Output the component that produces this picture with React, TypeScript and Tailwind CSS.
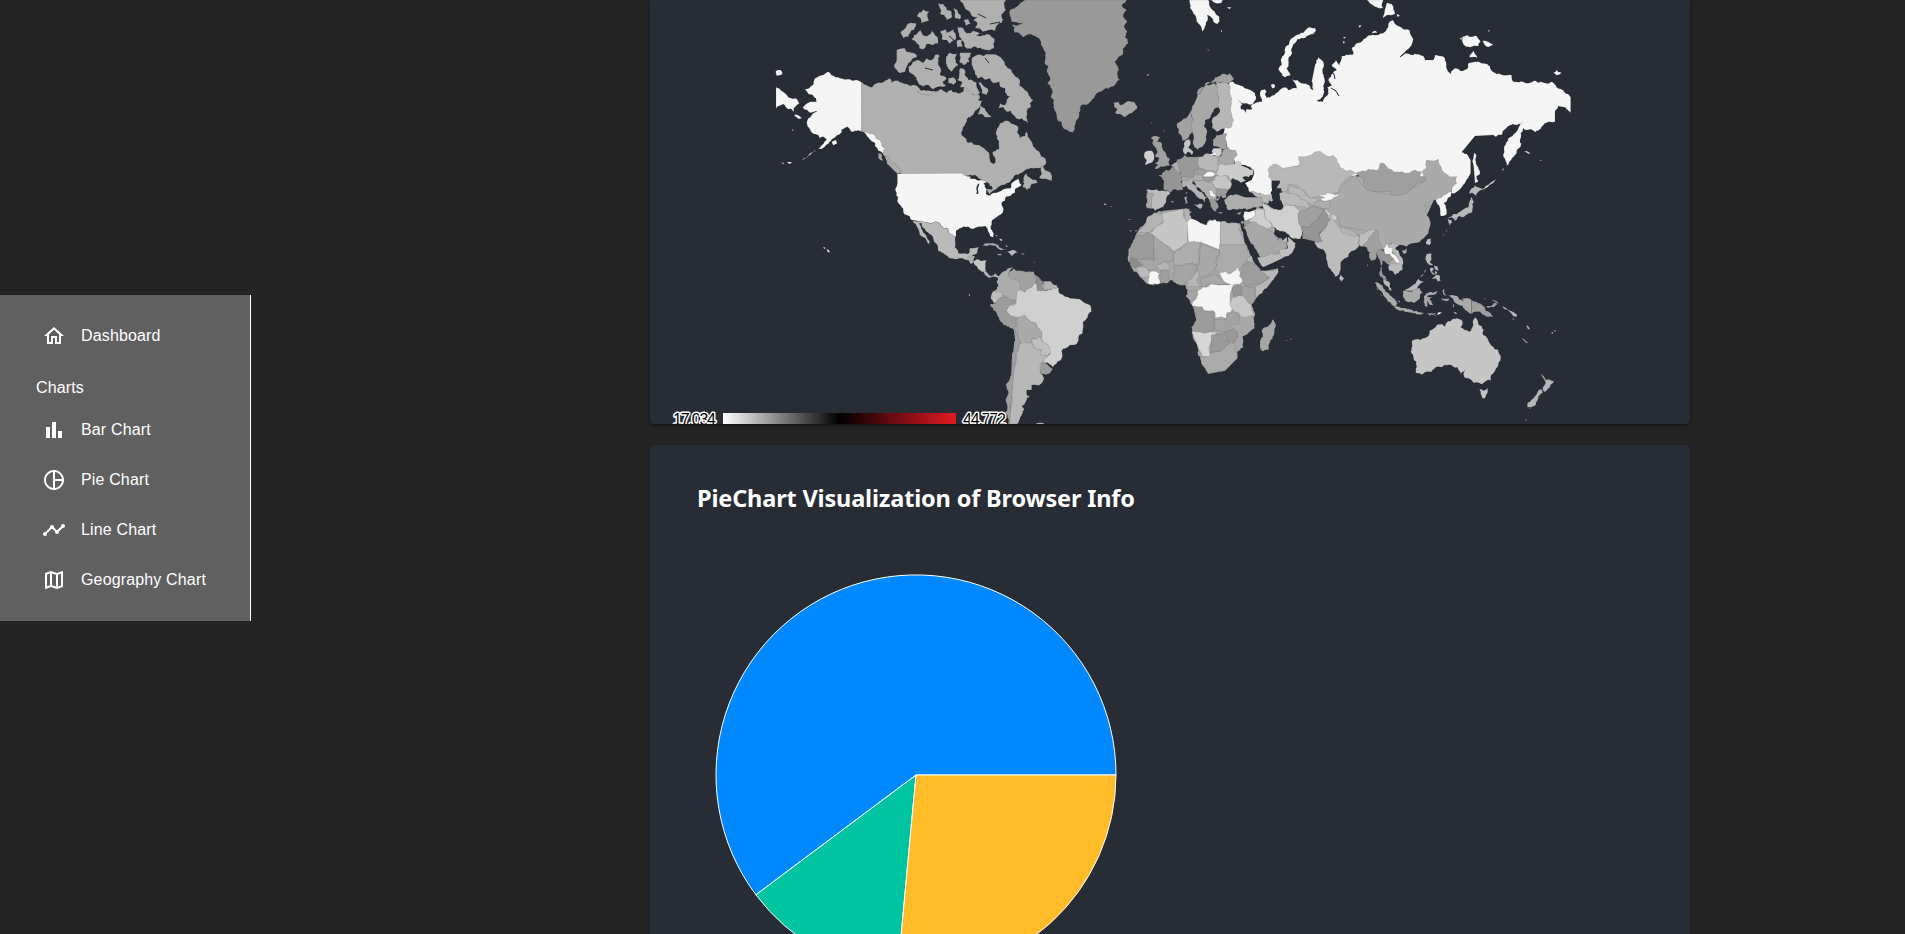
import React from "react";

type Shape = [fill: string, points: string];
type Region = { x: number; y: number; shapes: Shape[] };

// Outlines are in thirds of a pixel, relative to each region's origin.
const SEA = "#282c34";
const LAND = "#acacac";
const regions: Region[] = [
  {
    x: 760, y: 0,
    shapes: [
      ["#b0b0b0", "305,246 335,262 350,250 365,248 388,235 395,248 415,242 440,252 475,262 490,275 520,272 545,268 560,278 575,270 600,280 612,262 620,248 632,265 638,285 650,278 660,290 655,300 668,302 662,315 650,330 640,345 625,352 610,380 605,405 620,425 650,435 680,452 687,458 690,480 702,492 706,478 697,460 715,448 717,425 710,415 712,385 720,370 735,362 760,372 775,380 772,398 780,415 795,408 800,392 808,415 820,440 840,460 858,475 855,495 835,505 800,508 780,520 760,535 730,555 700,572 688,585 680,570 690,555 670,545 640,530 605,524 425,524 400,500 380,475 362,450 340,420 320,400 305,392"],
      ["#aaaaaa", "375,470 385,468 395,485 410,500 425,520 412,522 395,505 380,490"],
      ["#aaaaaa", "355,460 365,462 370,482 358,478"],
      ["#b0b0b0", "790,535 800,520 812,535 830,542 833,548 815,552 800,570 788,562"],
      ["#b0b0b0", "840,500 850,498 855,510 868,515 876,530 875,543 860,538 838,535 845,520"],
      ["#b0b0b0", "635,175 650,165 670,168 685,163 700,163 722,172 735,195 755,210 765,228 780,240 778,255 790,265 805,280 820,300 810,310 812,322 800,335 803,370 785,355 775,358 760,345 752,332 740,335 730,322 715,325 720,310 735,315 740,300 750,290 738,280 735,265 720,260 718,245 700,250 690,235 672,238 665,230 652,235 645,215 635,195"],
      ["#b0b0b0", "652,245 668,255 685,270 680,285 665,280"],
      ["#b0b0b0", "660,318 675,325 680,335 695,350 680,352 665,342 655,345"],
      ["#b0b0b0", "445,200 458,185 475,180 490,188 500,175 515,180 525,165 540,168 535,185 542,205 540,225 560,235 548,245 558,258 530,262 520,268 505,255 490,260 470,240 462,225 450,218"],
      ["#b0b0b0", "410,150 435,145 440,155 458,158 472,168 455,180 445,190 440,200 435,215 420,220 405,205 402,198 410,180"],
      ["#b0b0b0", "558,170 570,158 590,160 585,175 595,195 582,205 575,215 558,195"],
      ["#b0b0b0", "600,158 635,158 625,175 628,185 610,195 598,185"],
      ["#b0b0b0", "600,205 615,210 618,230 625,240 650,248 660,280 640,285 625,270 615,262 600,262 605,245 590,240"],
      ["#b0b0b0", "565,235 580,232 588,248 580,255 565,250"],
      ["#b0b0b0", "470,275 492,270 520,278 515,282 480,280"],
      ["#b0b0b0", "422,98 440,75 455,68 468,70 462,90 452,95 445,110 430,115"],
      ["#b0b0b0", "470,48 490,28 508,32 502,48 506,62 485,70 482,55"],
      ["#b0b0b0", "535,8 550,12 560,30 575,35 573,55 560,60 552,45 540,40"],
      ["#b0b0b0", "580,25 592,30 602,45 600,58 585,55"],
      ["#b0b0b0", "455,118 462,105 482,90 488,105 502,108 515,88 522,100 533,112 535,130 515,135 500,132 490,148 478,145 470,130"],
      ["#b0b0b0", "540,95 555,88 560,98 580,88 588,102 586,120 570,132 560,120 545,118"],
      ["#b0b0b0", "592,82 610,85 620,100 640,92 670,98 650,108 690,104 704,118 702,145 670,148 640,140 622,146 612,128 598,110"],
      ["#b0b0b0", "590,122 605,120 608,140 592,142"],
      ["#b0b0b0", "600,0 738,0 732,12 738,30 725,42 730,60 715,72 705,92 685,90 668,95 645,82 652,70 640,62 652,50 635,48 630,35 615,25"],
      ["#b0b0b0", "610,62 625,58 632,72 618,78"],
      ["#f5f5f5", "135,268 158,255 165,235 190,225 205,215 215,226 235,232 270,238 290,240 305,247 305,395 285,392 275,396 262,380 245,388 240,402 215,418 205,432 185,447 165,452 150,465 125,478 150,460 170,450 190,432 200,418 190,410 178,415 165,402 142,378 145,355 155,345 172,335 150,338 128,322 150,305 170,305 158,285 145,282"],
      ["#f5f5f5", "305,392 330,402 342,402 348,415 360,420 365,438 375,445 370,460 355,452 345,430 325,412"],
      ["#f5f5f5", "48,212 62,210 68,218 60,226 50,227"],
      ["#f5f5f5", "48,260 75,280 85,292 108,295 118,310 108,318 100,335 80,325 70,312 48,326"],
      ["#f5f5f5", "102,345 115,346 125,354 115,356"],
      ["#f5f5f5", "215,425 228,420 232,430 220,436"],
      ["#f5f5f5", "62,490 72,489 72,492"], ["#f5f5f5", "80,488 95,486 92,491"], ["#f5f5f5", "96,388 101,390 98,393"],
      ["#f5f5f5", "190,740 197,744 192,747"], ["#f5f5f5", "200,748 206,750 210,757 204,757"],
    ],
  },
  {
    x: 980, y: 0,
    shapes: [
      ["#999999", "135,0 440,0 425,15 440,30 430,50 442,65 432,80 442,95 435,110 445,130 430,145 428,165 415,172 405,185 415,200 412,222 420,240 405,255 390,262 370,270 350,280 335,302 318,315 302,318 298,345 290,360 285,385 277,397 262,390 250,385 245,375 232,360 228,340 220,320 222,302 212,290 216,270 202,250 210,232 200,215 205,200 195,180 197,160 188,142 180,120 165,108 150,103 130,112 118,100 105,98 95,75 128,70 95,65 88,38 110,20"],
      ["#a5a5a5", "400,308 415,305 420,315 435,308 455,305 465,308 472,325 455,340 435,351 420,342 405,338 412,328 402,320"],
      ["#f5f5f5", "628,0 685,0 690,20 705,35 718,50 712,72 700,65 692,50 682,45 678,75 668,95 660,75 650,65 645,45 635,30"],
      ["#f5f5f5", "688,0 730,0 725,8 708,10"],
      ["#f5f5f5", "740,22 755,22 748,28"], ["#f5f5f5", "722,92 726,90 725,98"], ["#a5a5a5", "682,147 688,149 684,152"], ["#f5f5f5", "500,225 510,220 504,228"],
      ["#c6c6c6", "372,610 380,612 376,615"], ["#c6c6c6", "392,618 397,619 394,621"], ["#c6c6c6", "445,657 452,658 448,660"], ["#a5a5a5", "550,392 553,391 553,398"], ["#a5a5a5", "512,367 516,368 515,372"],
    ],
  },
  {
    x: 1260, y: 0,
    shapes: [
      ["#f5f5f5", "-92,245 -80,245 -62,255 -38,266 -15,280 -12,298 -22,312 -40,310 -65,300 -52,312 -57,328 -42,338 -40,327 -24,328 -28,318 -12,308 5,305 0,285 4,270 15,268 20,275 15,284 20,293 50,278 72,262 85,270 110,265 105,250 95,238 112,240 125,250 150,258 160,270 155,245 165,195 175,172 190,185 188,215 194,240 192,265 188,290 170,300 188,305 205,282 202,262 215,258 205,240 218,220 230,210 215,195 228,180 238,195 245,168 280,162 275,145 290,130 320,112 350,105 378,92 385,72 398,60 415,78 430,88 450,92 460,118 455,135 440,150 420,170 440,160 455,165 490,168 495,180 520,180 525,165 555,175 562,210 572,222 585,205 600,212 620,208 625,190 645,185 665,190 690,198 695,212 710,222 755,225 760,245 800,250 822,242 835,248 875,245 890,262 915,278 932,292 932,338 915,322 895,318 885,335 885,365 860,368 845,380 825,397 812,388 800,390 790,385 782,400 780,420 782,440 770,460 748,485 738,500 730,470 732,440 745,415 765,400 775,385 788,365 770,375 750,376 735,388 725,405 708,410 700,405 645,408 605,457 620,462 632,480 632,520 615,550 595,572 575,580 570,560 585,540 555,540 535,515 520,490 510,490 500,530 470,530 440,528 410,525 385,515 370,500 350,520 325,518 300,525 285,530 260,525 235,518 215,485 195,480 180,467 165,467 148,480 125,480 125,505 95,512 70,517 45,505 38,515 40,530 35,545 35,560 32,580 35,605 20,595 0,580 -30,577 -45,550 -25,540 -20,510 -45,495 -70,495 -85,470 -100,440 -112,420 -108,395 -90,360 -98,330 -108,290"],
      ["#f5f5f5", "642,458 648,472 650,495 660,522 650,528 655,546 645,550 641,500"],
      ["#f5f5f5", "55,208 65,195 62,180 72,165 75,145 88,128 95,115 110,105 130,98 150,82 165,84 168,92 160,102 140,108 130,115 112,118 105,130 95,145 92,168 85,180 80,205 92,225 75,232 65,220"],
      ["#f5f5f5", "32,255 42,252 45,262 36,265"],
      ["#f5f5f5", "320,0 370,0 365,15 370,25 355,24 345,20"],
      ["#f5f5f5", "383,8 395,12 400,28 405,42 385,45 368,54 374,30"],
      ["#f5f5f5", "410,42 420,48 412,50"], ["#f5f5f5", "335,100 345,92 352,98"], ["#f5f5f5", "295,78 304,75 300,83"], ["#f5f5f5", "250,110 258,112 252,116"], ["#f5f5f5", "248,125 253,123 252,132"],
      ["#f5f5f5", "608,110 622,105 630,110 650,108 662,125 655,138 630,142 612,135"],
      ["#f5f5f5", "668,122 685,125 700,135 680,140"],
      ["#f5f5f5", "640,152 652,175 628,172 632,162"],
      ["#f5f5f5", "600,115 606,112 605,122"], ["#f5f5f5", "684,90 690,92 686,95"],
      ["#f5f5f5", "880,218 890,210 905,218 890,226"],
      ["#e5e5e5", "665,568 690,550 710,538 692,553"], ["#e5e5e5", "725,512 733,502 730,510"], ["#e5e5e5", "792,455 800,453 812,460 805,461"], ["#e5e5e5", "840,480 845,481 842,484"],
      [LAND, "68,565 48,510 120,495 180,475 280,530 340,525 500,530 540,560 480,690 440,725 360,730 325,715 230,685 180,695 125,695 100,640 72,625 64,590"],
      ["#aaaaaa", "200,600 240,575 262,545 285,525 305,555 345,575 405,587 455,567 498,540 485,515 498,505 500,480 535,478 545,505 568,530 592,530 590,550 575,575 550,590 530,600 515,600 498,608 490,620 515,612 495,632 500,645 512,670 505,700 480,725 440,740 420,735 390,730 375,740 360,705 350,690 320,695 300,690 250,680 240,675 235,650 220,650 200,625"],
      ["#9f9f9f", "288,522 300,515 325,508 355,510 360,490 370,490 385,505 410,515 440,520 465,510 485,515 478,530 498,535 498,542 470,550 455,565 445,575 405,585 380,575 345,575 320,570 310,555 310,540"],
      ["#f5f5f5", "527,600 545,592 560,582 575,575 572,590 552,608 560,630 560,642 542,648 540,625 532,612"],
      ["#b8b8b8", "628,582 635,565 645,555 655,562 670,570 655,575 648,588 636,578"],
      ["#b8b8b8", "635,590 642,605 638,625 632,640 618,645 610,652 598,648 588,660 575,652 562,655 580,642 600,635 610,628 625,622 628,605"],
      ["#b8b8b8", "562,655 575,660 572,672 565,670"], ["#b8b8b8", "580,655 592,655 585,662"],
    ],
  },
  {
    x: 1120, y: 60,
    shapes: [
      [LAND, "200,292 295,288 342,300 342,340 320,378 290,405 268,405 240,372 215,362 185,362 160,385 150,345"],
      [LAND, "240,110 290,72 328,72 326,100 296,108 272,145 252,185 245,235 225,235 218,170"],
      [LAND, "376,472 410,440 455,448 538,456 540,515 492,508 458,495 462,520 500,550 496,575 430,605 400,555 372,495"],
      [LAND, "430,432 460,445 455,470 435,460"],
      [LAND, "600,530 640,500 720,540 718,555 660,600 620,590"],
      ["#a2a2a2", "172,190 185,182 208,160 215,148 225,135 228,120 240,105 230,100 240,85 255,80 258,68 275,65 285,52 300,48 305,42 320,45 330,40 342,58 325,70 300,68 285,65 260,75 245,90 225,125 215,150 220,180 218,215 205,235 188,242 175,220"],
      ["#a9a9a9", "260,75 285,70 295,85 298,120 302,138 280,155 272,172 255,182 252,198 262,215 258,230 248,260 232,270 220,240 216,215 220,180 215,150 225,125 245,90"],
      ["#b6b6b6", "285,65 300,70 318,65 328,75 330,100 335,130 332,150 342,180 325,205 290,215 277,205 275,185 282,170 300,150 295,110"],
      ["#c4c4c4", "190,265 192,248 208,238 212,250 205,262 220,275 215,285 205,275 198,285"],
      ["#a0a0a0", "100,240 92,235 110,228 122,232 112,245 125,248 128,268 138,280 142,292 150,298 148,318 128,320 105,328 115,315 105,308 118,295 105,290 112,280 108,265 98,252"],
      ["#cfcfcf", "72,288 82,272 95,272 102,285 98,305 75,315 80,300"],
      ["#959595", "108,345 125,345 132,335 150,330 160,320 178,330 190,345 183,360 188,390 165,388 150,397 130,387 132,365 125,352"],
      ["#bcbcbc", "78,390 110,388 132,392 152,398 140,412 138,428 130,440 105,452 95,445 80,445 82,420"],
      ["#a8a8a8", "79,398 100,400 95,415 95,447 80,445"],
      ["#adadad", "152,318 175,298 180,325 182,342 165,328"],
      ["#999999", "172,298 185,295 192,285 205,292 235,290 238,325 220,330 232,345 220,352 185,352 178,325"],
      ["#b8b8b8", "233,295 260,280 290,288 295,325 285,335 265,332 238,325"],
      ["#aeaeae", "183,352 220,352 225,342 250,342 250,355 230,362 210,358 190,365"],
      ["#a0a0a0", "222,332 245,327 262,335 248,345 232,345"],
      ["#b2b2b2", "187,362 215,355 222,360 218,372 235,392 262,415 255,415 255,432 248,418 230,410 212,390 200,378 188,382"],
      ["#b2b2b2", "222,434 247,432 240,448"], ["#b2b2b2", "192,412 202,408 204,430 195,432"], ["#959595", "195,398 202,396 201,406"], ["#bcbcbc", "152,424 162,422 158,429"],
      ["#f5f5f5", "250,345 262,335 288,340 270,350 252,350"],
      ["#9c9c9c", "248,352 270,352 288,345 275,362 252,365"],
      ["#b0b0b0", "222,362 250,362 275,368 290,388 290,415 285,425 272,430 262,412 245,392 228,380"],
      ["#c4c4c4", "275,368 288,348 318,346 330,362 334,378 325,390 295,388"],
      ["#9a9a9a", "288,388 325,390 318,405 300,412 288,410"],
      ["#999999", "268,422 300,410 298,418 285,422 296,440 288,455 272,440"],
      ["#999999", "290,457 310,457 300,461"], ["#a8a8a8", "348,460 370,453 360,464"],
      ["#f5f5f5", "266,392 275,392 280,402 288,405 282,412 270,408"],
      ["#cbcbcb", "290,335 300,312 345,310 355,303 365,318 402,328 398,345 368,352 378,362 362,368 350,360 340,355 330,360 318,346 290,345"],
      ["#a9a9a9", "295,300 305,285 308,270 320,262 345,270 352,285 342,295 345,308 300,312"],
      ["#a0a0a0", "278,240 290,225 320,220 318,240 325,262 305,268 280,258"],
      ["#cfcfcf", "275,275 280,265 305,265 305,282 290,290"], ["#f5f5f5", "268,282 285,275 290,285 272,287"],
      ["#adadad", "312,420 322,412 348,403 375,412 405,412 428,412 432,440 395,445 380,450 345,448 320,445"],
      ["#a5a5a5", "305,405 318,403 320,413 308,415"],
      ["#b8b8b8", "390,395 420,400 455,405 460,422 448,420 442,432 428,428 425,412 405,408"],
      ["#f5f5f5", "372,455 408,450 402,470 375,482 370,470"],
      ["#cecece", "408,450 428,448 435,468 452,490 455,500 435,505 405,490 385,480 402,470"],
      ["#b8b8b8", "362,485 370,482 366,502"],
      ["#9a9a9a", "368,485 385,480 392,490 375,502"],
      ["#d0d0d0", "430,428 445,438 458,448 480,450 490,440 520,435 538,452 535,480 547,515 542,535 510,530 495,515 470,510 455,490 435,468"],
      ["#a8a8a8", "368,502 392,488 398,486 440,508 460,520 470,535 503,545 500,565 460,585 422,595 410,570 390,545 380,518"],
      ["#bababa", "412,592 422,592 462,582 482,578 488,595 430,622 418,608"],
      ["#c0c0c0", "478,575 503,565 505,530 527,550 522,568 505,588 488,595"],
      ["#b8b8b8", "470,535 485,545 500,530 503,545 485,548"],
      ["#b8b8b8", "443,330 460,312 475,315 490,325 515,320 538,312 535,290 558,290 585,275 600,273 620,288 640,285 655,310 665,325 690,330 708,340 695,350 680,355 660,380 652,398 620,400 590,410 570,415 550,390 535,380 505,375 500,395 485,395 483,385 468,385 478,372 480,362 458,362 445,350"],
      ["#bababa", "478,400 492,395 505,400 515,392 530,405 560,420 575,440 560,445 535,440 520,435 490,440 485,425"],
      ["#b8b8b8", "503,375 535,385 550,392 572,415 595,415 590,425 578,438 560,425 530,405 505,400"],
      ["#f5f5f5", "597,405 622,398 658,402 642,412 628,420 600,422 615,412"],
      ["#adadad", "580,428 600,420 628,424 632,440 605,445 585,440"],
      ["#a0a0a0", "538,455 560,448 580,440 600,443 612,448 600,465 595,478 575,490 572,500 545,502 536,478"],
      ["#959595", "545,502 572,500 575,490 595,478 600,465 610,450 625,458 632,478 615,505 598,525 608,542 590,552 580,543 548,537"],
      ["#bcbcbc", "597,525 615,508 632,478 622,465 638,472 650,490 665,510 715,525 720,533 740,528 720,545 718,558 700,572 685,590 662,608 662,630 655,645 645,650 632,628 620,600 612,570 595,565 583,548 608,545"],
      ["#bcbcbc", "745,522 768,508 775,516 762,530 745,540 740,528"],
      ["#b4b4b4", "662,498 680,508 712,520 712,528 685,524 662,512"],
      ["#b0b0b0", "718,535 738,540 738,562 728,555 715,555"],
      ["#d0d0d0", "612,445 622,450 634,465 626,468"], ["#d0d0d0", "632,462 650,466 650,480 636,478"],
      ["#bcbcbc", "660,638 672,655 663,665 657,655"],
    ],
  },
  {
    x: 1100, y: 190,
    shapes: [
      ["#a8a8a8", "162,70 190,62 262,55 275,65 265,88 290,92 320,105 330,88 355,95 395,97 420,100 430,130 440,165 455,200 480,235 485,245 535,235 530,255 500,295 468,325 455,350 463,380 464,415 428,440 430,472 412,485 412,505 375,542 325,552 315,535 300,500 285,455 275,425 288,385 278,350 257,318 262,300 255,285 230,282 215,270 175,282 148,283 120,262 95,235 85,215 92,170 110,130 135,100"],
      ["#b4b4b4", "112,128 138,95 142,80 162,68 175,72 190,70 190,95 165,112 148,128"],
      ["#c6c6c6", "148,130 165,112 190,98 188,70 250,57 255,85 265,100 262,150 265,155 222,185 190,160"],
      ["#b6b6b6", "250,57 270,56 268,75 274,85 262,95 255,82"],
      ["#f5f5f5", "262,95 272,86 290,92 302,100 320,105 328,92 345,88 362,95 360,180 300,155 280,162 265,155"],
      ["#b8b8b8", "362,95 385,100 410,98 420,105 425,125 415,115 437,165 360,165"],
      ["#ababab", "358,165 437,165 450,195 440,210 430,235 415,235 410,245 385,250 360,255 345,240 350,205 358,195"],
      ["#b8b8b8", "440,205 455,198 460,215 480,235 455,215 442,215"],
      ["#9e9e9e", "430,225 445,215 470,225 480,245 510,262 480,282 440,288 425,272 418,258"],
      ["#b8b8b8", "482,243 500,242 535,235 532,252 500,295 468,325 465,290 485,280 510,262"],
      ["#f5f5f5", "358,250 375,245 385,252 408,240 415,232 420,245 418,258 428,275 400,285 385,280"],
      ["#a8a8a8", "302,160 358,180 350,205 345,240 305,262 290,240 298,215"],
      ["#adadad", "222,190 240,180 265,155 300,160 298,200 290,225 255,222 225,228 220,215"],
      ["#9c9c9c", "92,170 115,135 130,138 138,130 160,135 163,210 120,208 92,208"],
      ["#a6a6a6", "160,135 222,188 220,212 190,218 170,235 150,240 130,228 122,208 163,210"],
      ["#8d8d8d", "87,215 95,203 110,208 125,225 120,232 92,230"],
      ["#bababa", "105,235 138,232 148,245 145,262 130,262 115,250"],
      ["#f5f5f5", "147,250 155,243 178,250 180,280 148,283 145,268"],
      ["#b4b4b4", "168,232 195,215 210,232 200,240 180,242"],
      ["#9f9f9f", "182,242 205,240 208,270 180,280"],
      ["#a4a4a4", "222,228 255,222 290,225 292,240 275,268 260,275 250,285 232,282 218,268"],
      ["#b6b6b6", "292,240 298,262 290,270 300,290 262,290 260,275 275,265"],
      ["#a6a6a6", "298,268 345,250 368,270 385,285 335,282 305,290"],
      ["#a5a5a5", "262,300 280,302 292,305 288,325 275,335 257,318"],
      ["#f5f5f5", "275,345 278,335 290,325 292,305 308,292 325,290 335,282 358,285 398,285 400,292 390,318 390,340 395,362 380,368 382,385 345,382 340,362 312,362 305,350"],
      ["#959595", "395,293 422,285 428,300 422,315 400,320"],
      ["#a2a2a2", "425,290 440,288 465,290 465,315 468,325 455,342 428,322"],
      ["#c8c8c8", "395,325 428,318 455,345 455,358 463,378 428,382 415,368 398,360 388,340"],
      ["#9c9c9c", "280,350 302,350 312,362 340,365 342,385 342,420 320,428 275,425 288,385"],
      ["#a3a3a3", "342,388 380,388 385,370 410,368 420,380 418,400 395,405 375,425 345,420"],
      ["#d6d6d6", "275,425 320,428 362,430 335,435 332,460 328,502 308,500 298,480"],
      ["#9a9a9a", "335,435 365,432 388,458 375,475 355,485 332,490"],
      ["#999999", "370,430 400,415 412,425 415,440 402,458 385,455"],
      ["#ababab", "300,502 328,500 332,488 355,485 385,462 402,460 412,490 412,505 375,542 345,545 325,552 315,535"],
      ["#c8c8c8", "375,512 385,506 386,515"],
      ["#a5a5a5", "520,388 527,410 518,440 505,480 490,484 480,472 480,455 488,440 485,420 505,408"],
      ["#bababa", "542,229 555,230 546,232"], ["#bababa", "557,450 562,450 560,453"], ["#bababa", "570,446 576,446 573,449"],
      ["#bababa", "10,42 19,43 14,46"], ["#bababa", "84,87 92,88 88,90"], ["#bababa", "88,121 96,122 92,125"], ["#bababa", "104,122 112,119 108,125"],
    ],
  },
  {
    x: 1320, y: 180,
    shapes: [
      [LAND, "130,165 175,150 200,192 235,195 225,212 200,215 178,210 150,195 132,188"],
      [LAND, "180,215 215,205 240,240 235,268 215,265 195,245"],
      ["#a0a0a0", "130,195 138,180 150,160 165,150 178,165 175,178 190,205 175,212 170,230 165,240 152,242 150,218"],
      ["#bebebe", "118,160 135,158 160,148 168,153 150,170 138,188 128,200 118,195"],
      ["#959595", "172,215 185,208 200,218 215,215 225,235 205,250 188,242 185,270 190,285 202,300 190,300 178,285 182,255 175,235"],
      ["#bababa", "203,195 220,188 238,195 225,208 245,232 250,250 248,270 225,285 220,275 208,272 205,258 212,250 232,252 238,240 218,212"],
      ["#f5f5f5", "192,205 200,190 205,202 218,208 215,218 230,230 238,245 235,250 222,238 210,222 195,222"],
      ["#bababa", "190,300 208,305 215,332 207,330 195,315"],
      ["#a9a9a9", "156,304 175,308 190,325 208,342 225,358 232,370 230,385 215,375 200,358 185,335 170,320"],
      ["#a9a9a9", "220,382 250,384 270,388 282,394 312,398 308,402 270,398 235,390"],
      ["#a9a9a9", "316,398 330,400 350,398 345,403 330,407"],
      ["#f5f5f5", "342,406 355,397 367,397 352,404"],
      ["#a9a9a9", "248,335 255,330 275,335 285,322 300,325 308,338 300,345 298,358 285,368 255,362"],
      ["#bababa", "255,328 275,318 288,308 295,296 313,306 300,312 292,325 280,332 262,332"],
      ["#a9a9a9", "312,355 318,340 338,338 352,332 348,342 325,345 322,352 338,350 328,358 340,375 330,375 322,362 322,382 314,378"],
      ["#a9a9a9", "385,346 398,345 412,348 418,358 430,362 425,352 440,354 455,360 455,402 435,390 428,378 405,368 398,355"],
      ["#9f9f9f", "455,360 480,370 495,382 498,392 512,400 520,410 500,410 480,395 465,395 455,402"],
      ["#9f9f9f", "498,378 512,378 525,368 532,372 520,382 505,384"], ["#9f9f9f", "515,358 528,362 536,372 528,368"], ["#9f9f9f", "490,354 498,356 494,358"],
      ["#a9a9a9", "368,330 375,326 374,340 380,348 370,345"], ["#a9a9a9", "362,356 388,356 385,362 368,361"], ["#a9a9a9", "398,375 402,372 400,385"], ["#a9a9a9", "400,395 412,402 405,402"],
      ["#b8b8b8", "545,376 558,384 572,392 592,405 588,412 575,402 555,388"], ["#b8b8b8", "576,415 585,417 580,419"],
      ["#b8b8b8", "618,434 624,438 630,448 624,448"], ["#b8b8b8", "604,474 615,480 626,490 618,488"], ["#b8b8b8", "692,458 700,456 698,462"], ["#b8b8b8", "700,452 710,448 705,455"],
      ["#b8b8b8", "320,222 334,220 335,238 330,248 340,255 330,256 318,242"],
      ["#b8b8b8", "342,256 352,258 356,272 348,270"], ["#b8b8b8", "330,264 342,266 336,275 345,285 335,280"], ["#b8b8b8", "336,296 345,288 358,285 362,302 352,304 348,295"], ["#b8b8b8", "300,292 318,268 316,275 304,290"], ["#b8b8b8", "345,272 352,278 347,284"],
      ["#c0c0c0", "318,192 322,178 333,175 328,196"], ["#aaaaaa", "245,212 260,205 260,218 250,222"],
      ["#a0a0a0", "141,255 145,252 144,268"], ["#b8b8b8", "368,165 372,163 370,168"], ["#b8b8b8", "378,152 382,150 380,156"], ["#b8b8b8", "387,132 391,130 390,138"],
      ["#a9a9a9", "168,322 174,328 172,330"], ["#a9a9a9", "180,340 187,350 182,346"], ["#a9a9a9", "232,362 240,362 238,368"],
      ["#c6c6c6", "275,485 290,478 325,468 328,455 342,445 350,435 365,432 375,440 382,425 400,416 425,420 428,432 422,442 448,455 455,445 458,425 465,410 475,432 485,438 490,465 500,472 508,488 520,500 525,508 535,510 538,545 528,565 518,582 512,602 495,605 485,613 460,608 445,595 432,590 436,570 422,582 412,562 385,555 358,560 335,575 320,575 305,584 287,578 290,560 280,530 272,515"],
      ["#c6c6c6", "478,628 490,632 503,624 502,640 495,655 487,655"],
      ["#b5b5b5", "660,578 672,590 678,600 702,602 690,622 675,636 668,628 676,612 672,598"],
      ["#b5b5b5", "655,632 665,628 668,638 655,655 648,672 635,682 622,682 622,670 640,655"],
      ["#b5b5b5", "628,684 632,683 630,688"], ["#b5b5b5", "615,720 621,717 618,722"],
    ],
  },
  {
    x: 860, y: 160,
    shapes: [
      [LAND, "445,445 470,400 530,385 595,415 595,560 565,590 560,605 545,635 500,660 475,700 452,780 455,600 466,540 462,500 450,465"],
      [LAND, "428,345 470,332 525,345 545,370 585,375 590,385 540,395 470,435 430,440 405,425 420,390"],
      [LAND, "470,430 445,445 400,430 430,400"],
      ["#f5f5f5", "112,41 305,40 335,52 378,65 375,80 378,102 385,106 410,98 430,88 452,85 460,65 475,52 485,75 465,88 465,98 450,108 438,110 435,122 425,128 428,158 410,172 395,185 392,200 400,232 390,228 382,205 375,198 355,200 340,207 325,200 305,203 288,212 288,230 270,222 262,205 250,207 240,190 205,188 155,180 150,170 132,162 125,142 112,125 108,95 112,70"],
      [SEA, "328,55 345,45 352,50 365,58 350,60 340,56"],
      [SEA, "350,80 358,70 354,102 349,102"],
      [SEA, "370,68 378,70 382,78 395,78 398,86 388,88 375,82"],
      [SEA, "380,105 395,98 392,106"],
      ["#bababa", "158,182 205,188 240,190 250,207 262,205 270,222 286,232 285,262 295,280 322,282 330,264 358,262 352,278 338,285 325,300 310,296 285,298 262,288 235,274 232,255 220,238 200,215 185,190 178,190 188,212 200,230 210,246 205,252 190,232 178,222 175,208"],
      ["#b0b0b0", "318,298 328,288 345,288 342,305 332,312"],
      ["#c6c6c6", "340,305 350,298 380,302 378,335 365,335 350,318"],
      ["#b5b5b5", "365,333 380,335 392,348 405,340 418,350 416,358 402,350 388,354 375,345"],
      ["#a9a9a9", "366,256 375,250 395,250 415,255 425,265 442,270 422,270 408,258 390,255"],
      ["#bababa", "442,273 455,270 478,278 462,282 456,288 448,280"], ["#a9a9a9", "410,282 422,281 426,286 415,286"], ["#a9a9a9", "482,280 495,281 490,284"],
      ["#bababa", "405,224 414,226 410,230"], ["#bababa", "418,234 428,240 424,244"], ["#bababa", "435,255 444,258 440,262"], ["#bababa", "325,400 331,405 326,410"], ["#bababa", "521,305 525,306 523,309"],
      ["#bababa", "733,131 740,132 736,135"],
      ["#acacac", "414,352 425,338 438,332 460,322 445,340 455,355 478,362 482,388 468,395 466,430 430,408 405,398 400,393 415,378"],
      ["#a2a2a2", "448,335 460,325 468,332 500,335 522,335 535,350 525,365 528,378 510,382 495,395 480,388 478,362 455,355 445,345"],
      ["#8f8f8f", "530,348 550,365 548,385 552,390 535,395 525,378"],
      ["#b2b2b2", "550,364 572,364 590,375 598,388 580,388 552,390"],
      ["#bdbdbd", "400,393 425,400 430,410 410,425 402,432 392,415"],
      ["#9c9c9c", "390,432 405,432 430,405 445,415 466,420 465,430 445,440 440,455 455,470 470,475 468,518 430,495 410,460 392,440"],
      ["#d0d0d0", "440,450 448,435 468,432 470,395 480,390 495,397 515,380 528,370 532,392 560,392 580,385 595,382 598,400 610,405 630,415 660,418 690,435 694,455 670,485 668,520 650,552 630,555 605,572 603,600 578,622 565,610 550,605 570,582 568,560 545,540 545,515 528,490 500,475 475,470 455,468"],
      ["#aaaaaa", "472,475 495,465 505,480 528,490 545,515 545,530 518,535 512,548 482,552 472,520"],
      ["#c0c0c0", "515,538 540,530 548,545 568,560 572,578 560,588 540,585 545,570 520,555"],
      ["#b8b8b8", "480,550 510,548 520,555 545,570 540,585 560,588 550,602 540,612 540,635 552,655 545,670 515,675 515,690 500,690 500,705 510,710 495,730 485,738 493,748 470,792 445,792 452,740 455,700 462,620 468,580"],
      ["#9d9d9d", "545,608 562,612 578,628 565,642 540,638"],
      ["#a0a0a0", "463,518 472,520 480,550 468,580 460,660 452,740 450,792 435,758 442,738 440,712 445,700 440,670 450,650 456,620 456,580 462,550"],
      ["#b8b8b8", "530,790 545,788 555,795 525,795"],
      ["#a2a2a2", "500,332 515,334 508,338"],
    ],
  },
];

// Stable noise keyed to position, so neighbours sharing an edge stay aligned.
const noise = (x: number, y: number, k: number) => {
  const v = Math.sin(x * 12.9898 + y * 78.233 + k * 37.719) * 43758.5453;
  return (v - Math.floor(v)) * 2 - 1;
};

function roughen(x: number, y: number, nx: number, ny: number, ox: number, oy: number): string {
  const len = Math.hypot(nx - x, ny - y);
  if (len < 9 || len > 50 || x === nx || y === ny) return `L${nx.toFixed(1)} ${ny.toFixed(1)}`;
  const mx = (x + nx) / 2;
  const my = (y + ny) / 2;
  const amp = Math.min(len * 0.18, 4);
  const px = mx + noise(mx + ox * 3, my + oy * 3, 1) * amp;
  const py = my + noise(mx + ox * 3, my + oy * 3, 2) * amp;
  return roughen(x, y, px, py, ox, oy) + roughen(px, py, nx, ny, ox, oy);
}

function outline(points: string, ox: number, oy: number) {
  const p = points.split(" ").map((s) => s.split(",").map(Number));
  let d = `M${p[0][0]} ${p[0][1]}`;
  p.forEach(([x, y], i) => {
    const [nx, ny] = p[(i + 1) % p.length];
    d += roughen(x, y, nx, ny, ox, oy);
  });
  return d + "Z";
}

function WorldMap() {
  return (
    <svg className="block h-[424px] w-[1040px]" viewBox="650 0 1040 424">
      <defs>
        <linearGradient id="scale">
          <stop offset="0" stopColor="#fff" />
          <stop offset="0.5" stopColor="#000" />
          <stop offset="1" stopColor="#e31a22" />
        </linearGradient>
      </defs>
      {regions.map((r, i) => (
        <g key={i} transform={`translate(${r.x} ${r.y}) scale(0.33333)`}>
          {r.shapes.map(([fill, pts], j) => (
            <path key={j} d={outline(pts, r.x, r.y)} fill={fill} stroke={fill === SEA || fill === LAND ? "none" : "#000"} strokeOpacity="0.12" strokeWidth="2.4" />
          ))}
        </g>
      ))}
      {/* inlets and fjords */}
      <g fill="none" stroke={SEA} strokeWidth="1">
        <path d="M1327 67l3 5 4 2 1 5M1331 88l5 3 3 5M1400 57l8-7M1325 97l2-6" />
        <path d="M940 62l7 3M925 68l8 2M967 62l5 6M985 58l4 5M1000 22l-10 2M978 14l8 4M949 36l6 5" />
      </g>
      <rect x="723" y="413" width="233" height="14" fill="url(#scale)" />
      <g className="font-['Liberation_Sans',sans-serif] text-[16px]" fill="#000" stroke="#fff" strokeWidth="3" paintOrder="stroke" strokeLinejoin="round">
        <text x="673" y="425" textLength="43">17.034</text>
        <text x="963" y="425" textLength="43">44.772</text>
      </g>
    </svg>
  );
}

const icons = {
  home: "m12 5.69 5 4.5V18h-2v-6H9v6H7v-7.81l5-4.5M12 3 2 12h3v8h6v-6h2v6h6v-8h3L12 3z",
  bar: "M4 9h4v11H4zm12 4h4v7h-4zm-6-9h4v16h-4z",
  pie: "M12 2C6.48 2 2 6.48 2 12s4.48 10 10 10 10-4.48 10-10S17.52 2 12 2zm1 2.07c3.61.45 6.48 3.33 6.93 6.93H13V4.07zM4 12c0-4.06 3.07-7.44 7-7.93v15.87c-3.93-.5-7-3.88-7-7.94zm9 7.93V13h6.93c-.45 3.61-3.32 6.48-6.93 6.93z",
  line: "M23 8c0 1.1-.9 2-2 2-.18 0-.35-.02-.51-.07l-3.56 3.55c.05.16.07.34.07.52 0 1.1-.9 2-2 2s-2-.9-2-2c0-.18.02-.36.07-.52l-2.55-2.55c-.16.05-.34.07-.52.07s-.36-.02-.52-.07l-4.55 4.56c.05.16.07.33.07.51 0 1.1-.9 2-2 2s-2-.9-2-2 .9-2 2-2c.18 0 .35.02.51.07l4.56-4.55C8.02 9.36 8 9.18 8 9c0-1.1.9-2 2-2s2 .9 2 2c0 .18-.02.36-.07.52l2.55 2.55c.16-.05.34-.07.52-.07s.36.02.52.07l3.55-3.56C19.02 8.35 19 8.18 19 8c0-1.1.9-2 2-2s2 .9 2 2z",
  map: "M20.5 3l-.16.03L15 5.1 9 3 3.36 4.9c-.21.07-.36.25-.36.48V20.5c0 .28.22.5.5.5l.16-.03L9 18.9l6 2.1 5.64-1.9c.21-.07.36-.25.36-.48V3.5c0-.28-.22-.5-.5-.5zM10 5.47l4 1.4v11.66l-4-1.4V5.47zm-5 .99l3-1.01v11.7l-3 1.16V6.46zm14 11.08l-3 1.01V6.86l3-1.16v11.84z",
};

function Item({ icon, label }: { icon: keyof typeof icons; label: string }) {
  return (
    <a className="flex h-[50px] items-center gap-[15px] pl-[42px]">
      <svg className="size-6" viewBox="0 0 24 24" fill="#fff">
        <path d={icons[icon]} />
      </svg>
      <span>{label}</span>
    </a>
  );
}

export default function App() {
  return (
    <div className="flex h-screen items-start overflow-hidden bg-[#242424] text-white">
      <nav className="mt-[295px] h-[326px] w-[251px] shrink-0 border-r border-white bg-[#606060] pt-4 font-['Liberation_Sans',sans-serif] text-base tracking-[0.15px]">
        <Item icon="home" label="Dashboard" />
        <h6 className="flex h-11 items-center pt-2.5 pl-9">Charts</h6>
        <Item icon="bar" label="Bar Chart" />
        <Item icon="pie" label="Pie Chart" />
        <Item icon="line" label="Line Chart" />
        <Item icon="map" label="Geography Chart" />
      </nav>
      <main className="ml-[399px] flex w-[1040px] shrink-0 flex-col gap-[21px]">
        <section className="h-[424px] overflow-hidden rounded-b bg-[#282c34] shadow-[0_1px_3px_rgba(0,0,0,0.5)]">
          <WorldMap />
        </section>
        <section className="h-[600px] rounded bg-[#282c34] px-[47px] pt-[34px] shadow-[0_1px_3px_rgba(0,0,0,0.3)]">
          <h2 className="h-[38px] font-['Noto_Sans','Open_Sans',sans-serif] text-[23.5px] leading-[38px] font-bold tracking-[-0.16px] whitespace-nowrap">
            PieChart Visualization of Browser Info
          </h2>
          <svg className="mt-[38px] block h-[440px] w-[440px]" viewBox="697 555 440 440" stroke="#fff" strokeWidth="1">
            <path fill="#0088ff" d="M916 775H1116A200 200 0 1 0 755.9 894.8Z" />
            <path fill="#00c49f" d="M916 775L755.9 894.8A200 200 0 0 0 897.5 974.1Z" />
            <path fill="#ffbb28" d="M916 775L897.5 974.1A200 200 0 0 0 1116 775Z" />
          </svg>
        </section>
      </main>
    </div>
  );
}
